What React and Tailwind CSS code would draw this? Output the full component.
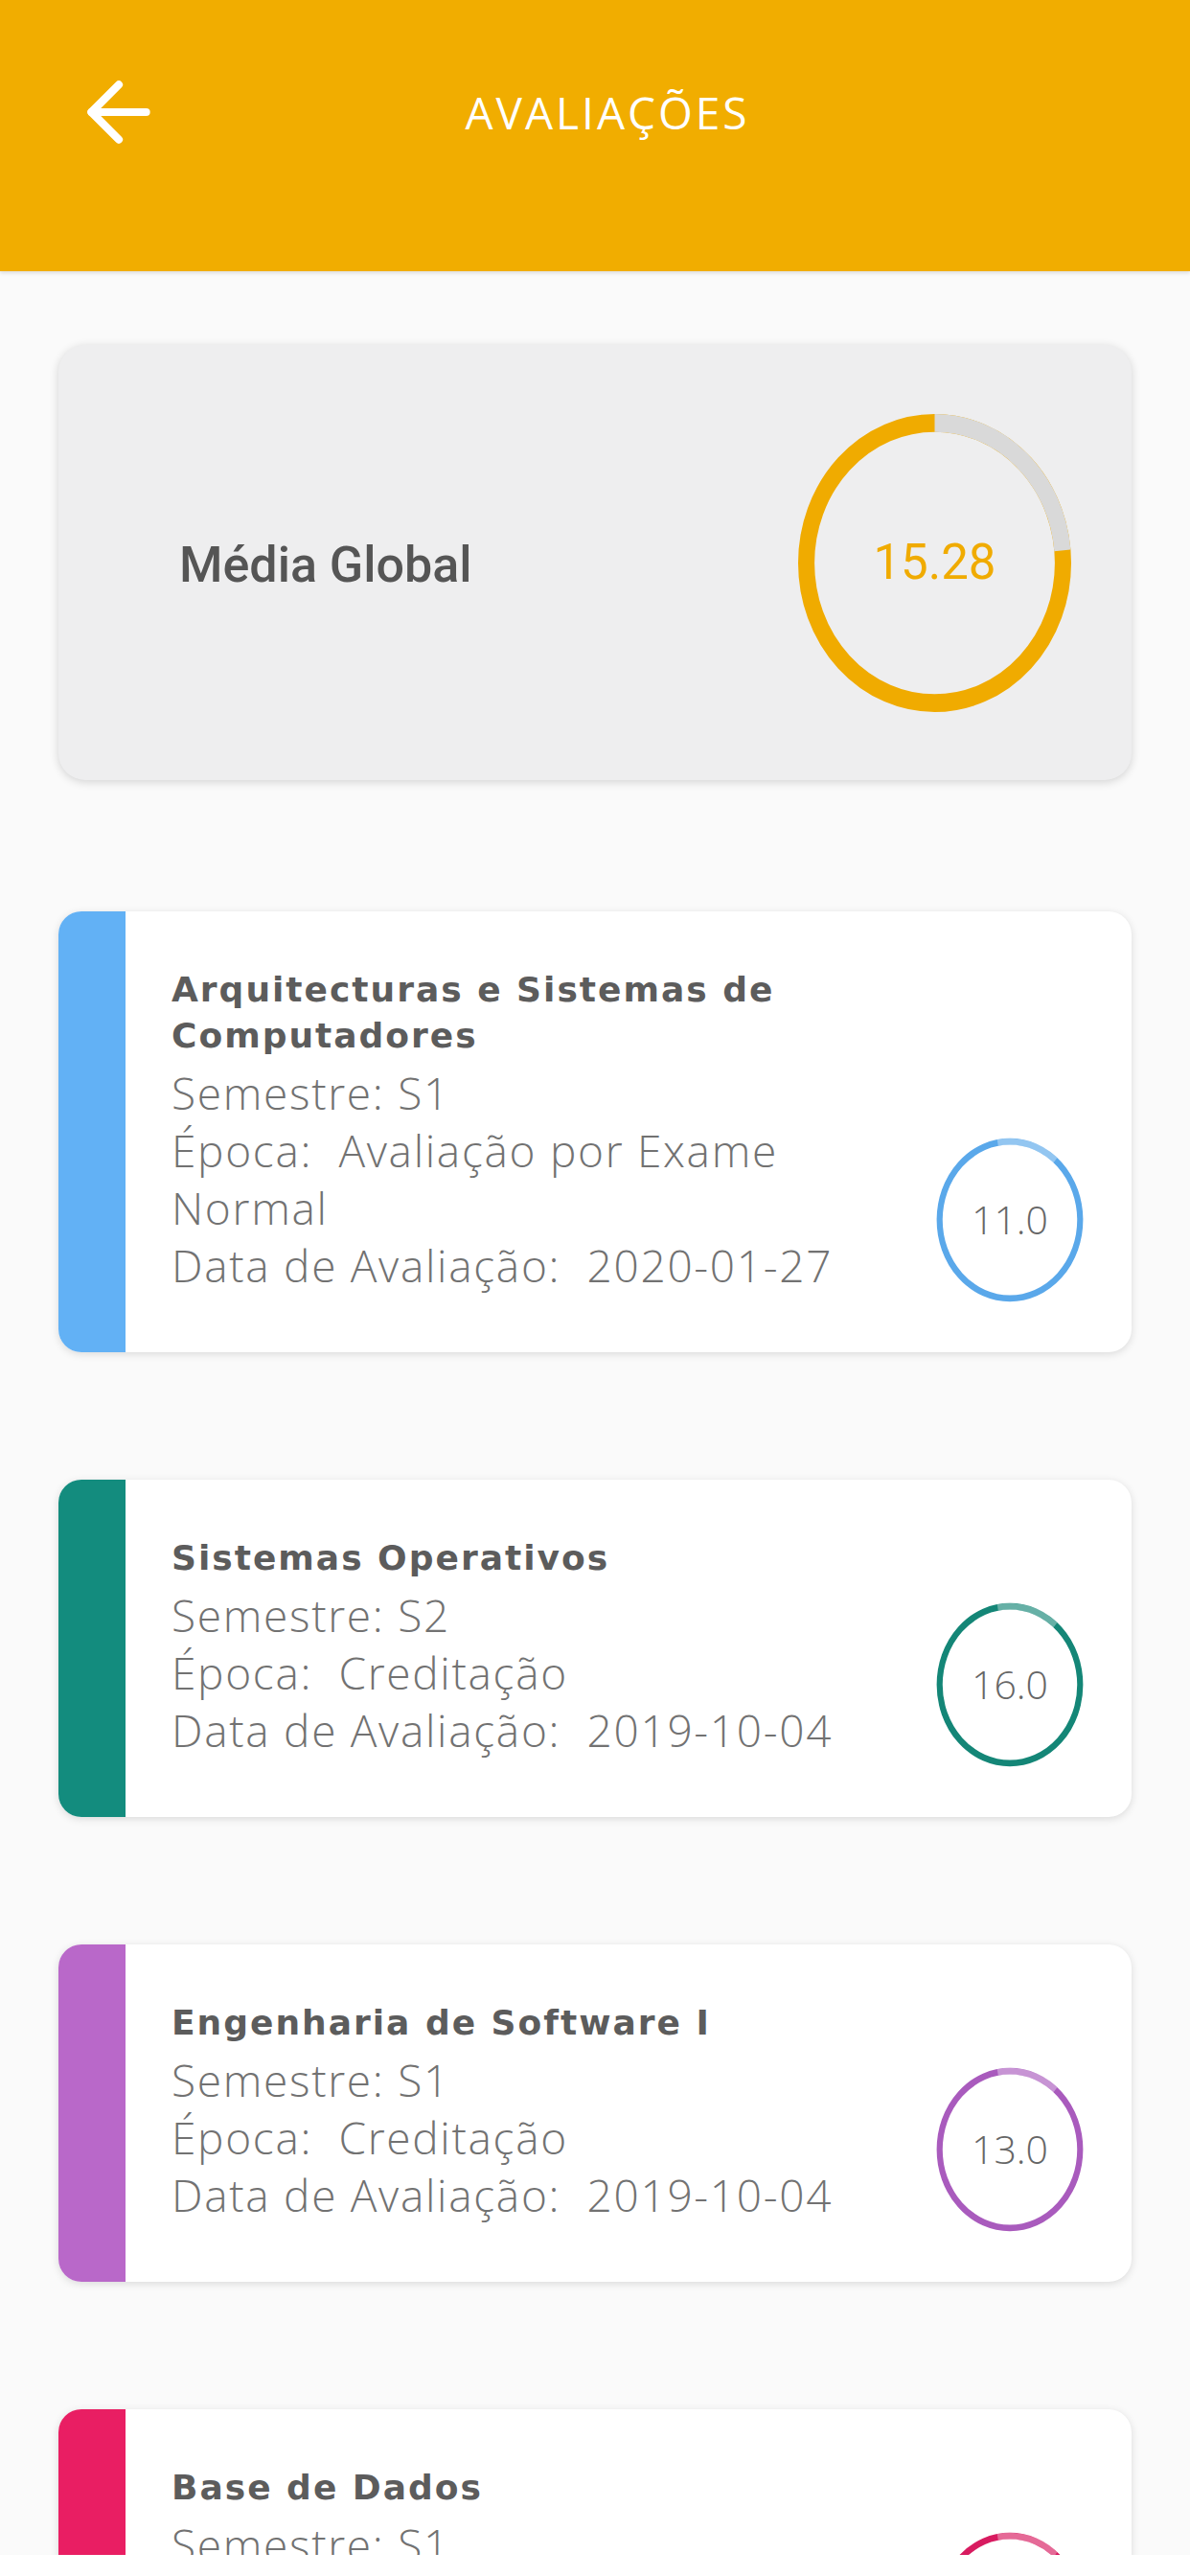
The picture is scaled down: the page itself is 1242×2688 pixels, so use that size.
import { ArrowLeft } from "lucide-react";

const courses = [
  {
    name: "Arquitecturas e Sistemas de Computadores",
    semestre: "S1",
    epoca: "Avaliação por Exame Normal",
    data: "2020-01-27",
    nota: "11.0",
    bar: "bg-[#62b1f5]",
    ring: "#5aa8ea",
  },
  {
    name: "Sistemas Operativos",
    semestre: "S2",
    epoca: "Creditação",
    data: "2019-10-04",
    nota: "16.0",
    bar: "bg-[#138c7e]",
    ring: "#148677",
  },
  {
    name: "Engenharia de Software I",
    semestre: "S1",
    epoca: "Creditação",
    data: "2019-10-04",
    nota: "13.0",
    bar: "bg-[#b968c9]",
    ring: "#a95bbd",
  },
  {
    name: "Base de Dados",
    semestre: "S1",
    epoca: "Creditação",
    data: "2019-10-04",
    nota: "14.0",
    bar: "bg-[#e91e63]",
    ring: "#d81b60",
  },
];

// grade ring: the screenshot is a bit stretched vertically, so the rings are ellipses
function GradeRing({ nota, color }) {
  return (
    <div className="relative flex h-[172px] w-[154px] items-center justify-center">
      <svg className="absolute inset-0 h-full w-full" viewBox="0 0 100 100" preserveAspectRatio="none">
        <circle cx="50" cy="50" r="47.6" fill="none" stroke={color} strokeWidth="4" />
        <circle
          cx="50"
          cy="50"
          r="47.6"
          fill="none"
          stroke="#ffffff"
          strokeOpacity="0.35"
          strokeWidth="4"
          pathLength="100"
          strokeDasharray="14 100"
          transform="rotate(-100 50 50)"
        />
      </svg>
      <span className="relative font-['Open_Sans',sans-serif] text-[41px] font-light text-[#666666]">{nota}</span>
    </div>
  );
}

function CourseCard({ c }) {
  return (
    <div className="flex overflow-hidden rounded-[24px] bg-white shadow-[0_2px_9px_rgba(0,0,0,0.13)]">
      <div className={`w-[70px] shrink-0 ${c.bar}`} />
      <div className="flex-1 pb-[61px] pl-[48px] pr-[30px] pt-[58px]">
        <p className="font-['DejaVu_Sans',sans-serif] text-[36px] font-bold leading-[48px] tracking-[2px] text-[#5c5c5c]">
          {c.name}
        </p>
        <div className="mt-[5px] whitespace-pre-wrap font-['Open_Sans',sans-serif] text-[46px] font-light leading-[60px] tracking-[1.7px] text-[#727272]">
          <p>{`Semestre: ${c.semestre}`}</p>
          <p>{`Época:  ${c.epoca}`}</p>
          <p>{`Data de Avaliação:  ${c.data}`}</p>
        </div>
      </div>
      <div className="shrink-0 self-end pb-[52px] pr-[50px]">
        <GradeRing nota={c.nota} color={c.ring} />
      </div>
    </div>
  );
}

export default function App() {
  return (
    <div className="flex h-[2688px] w-[1242px] flex-col overflow-hidden bg-white">
      <header className="relative z-10 h-[283px] shrink-0 bg-[#f1ad00] pt-[42px] shadow-[0_2px_4px_rgba(0,0,0,0.12)]">
        <div className="grid h-[150px] grid-cols-[1fr_auto_1fr] items-center">
          <div className="pl-[75px]">
            <ArrowLeft size={98} strokeWidth={2} color="#ffffff" />
          </div>
          <h1 className="pl-[26px] font-['Open_Sans',sans-serif] text-[46px] font-normal tracking-[3px] text-white">
            AVALIAÇÕES
          </h1>
          <div />
        </div>
      </header>

      <main className="h-[2383px] shrink-0 overflow-hidden bg-[#fafafa] px-[61px] pt-[77px]">
        <div className="flex h-[454px] items-center justify-between rounded-[28px] bg-[#eeeeef] pl-[126px] pr-[63px] shadow-[0_2px_10px_rgba(0,0,0,0.16)]">
          <span className="pt-[6px] font-['Roboto',sans-serif] text-[52px] font-medium text-[#555555]">Média Global</span>
          <div className="relative flex h-[311px] w-[285px] items-center justify-center">
            <svg className="absolute inset-0 h-full w-full" viewBox="0 0 100 100" preserveAspectRatio="none">
              <circle cx="50" cy="50" r="47" fill="none" stroke="#f0ab00" strokeWidth="6" />
              <circle
                cx="50"
                cy="50"
                r="47"
                fill="none"
                stroke="#d9d9d9"
                strokeWidth="6"
                pathLength="100"
                strokeDasharray="23.6 100"
                transform="rotate(-90 50 50)"
              />
            </svg>
            <span className="relative font-['Roboto',sans-serif] text-[51px] text-[#f0ab00]">15.28</span>
          </div>
        </div>

        <div className="mt-[137px] flex flex-col gap-[133px]">
          {courses.map((c) => (
            <CourseCard key={c.name} c={c} />
          ))}
        </div>
      </main>
      <div className="flex-1 bg-white" />
    </div>
  );
}
